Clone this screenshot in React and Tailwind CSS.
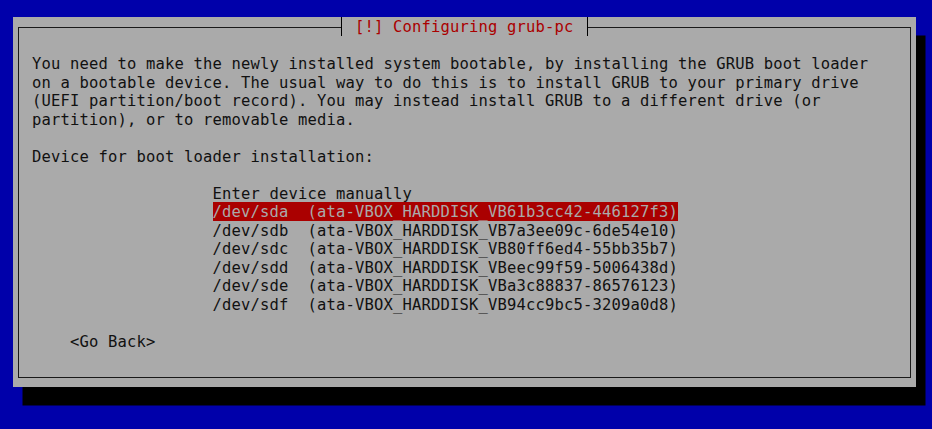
import React from "react";

const devices = [
  ["/dev/sda", "(ata-VBOX_HARDDISK_VB61b3cc42-446127f3)"],
  ["/dev/sdb", "(ata-VBOX_HARDDISK_VB7a3ee09c-6de54e10)"],
  ["/dev/sdc", "(ata-VBOX_HARDDISK_VB80ff6ed4-55bb35b7)"],
  ["/dev/sdd", "(ata-VBOX_HARDDISK_VBeec99f59-5006438d)"],
  ["/dev/sde", "(ata-VBOX_HARDDISK_VBa3c88837-86576123)"],
  ["/dev/sdf", "(ata-VBOX_HARDDISK_VB94cc9bc5-3209a0d8)"],
];

const para = [
  "You need to make the newly installed system bootable, by installing the GRUB boot loader",
  "on a bootable device. The usual way to do this is to install GRUB to your primary drive",
  "(UEFI partition/boot record). You may instead install GRUB to a different drive (or",
  "partition), or to removable media.",
];

function Row({ children, className = "" }) {
  return <div className={"h-[18.5px] " + className}>{children}</div>;
}

export default function App() {
  return (
    <div className="w-[932px] h-[429px] overflow-hidden bg-[#0000aa] pl-[13px] pt-[17.3px]">
      <div className="relative w-[902.5px] h-[370px] bg-[#aaaaaa] shadow-[9.5px_18.5px_0_0_#000] px-[4.75px] py-[9.25px] font-['DejaVu_Sans_Mono',monospace] text-[15.5px] tracking-[0.17px] leading-[18.5px] whitespace-pre text-[#111]">
        <div className="h-full border border-[#1a1a1a] pl-[13.25px] pt-[9.25px]">
          <Row />
          {para.map((l) => (
            <Row key={l}>{l}</Row>
          ))}
          <Row />
          <Row>Device for boot loader installation:</Row>
          <Row />
          <div className="pl-[180.5px]">
            <Row>Enter device manually</Row>
            {devices.map(([d, id], i) => (
              <Row key={d}>
                <span className={i === 0 ? "inline-block h-[18.5px] bg-[#aa0000] text-[#aaaaaa] -mt-px pt-px" : ""}>
                  {d + "  " + id}
                </span>
              </Row>
            ))}
          </div>
          <Row />
          <Row className="pl-[38px]">{"<Go Back>"}</Row>
        </div>
        <div className="absolute top-0 left-[327.75px] h-[18.5px] border-x border-black bg-[#aaaaaa] px-[13.25px] pt-px text-[#aa0000]">
          [!] Configuring grub-pc
        </div>
      </div>
    </div>
  );
}
